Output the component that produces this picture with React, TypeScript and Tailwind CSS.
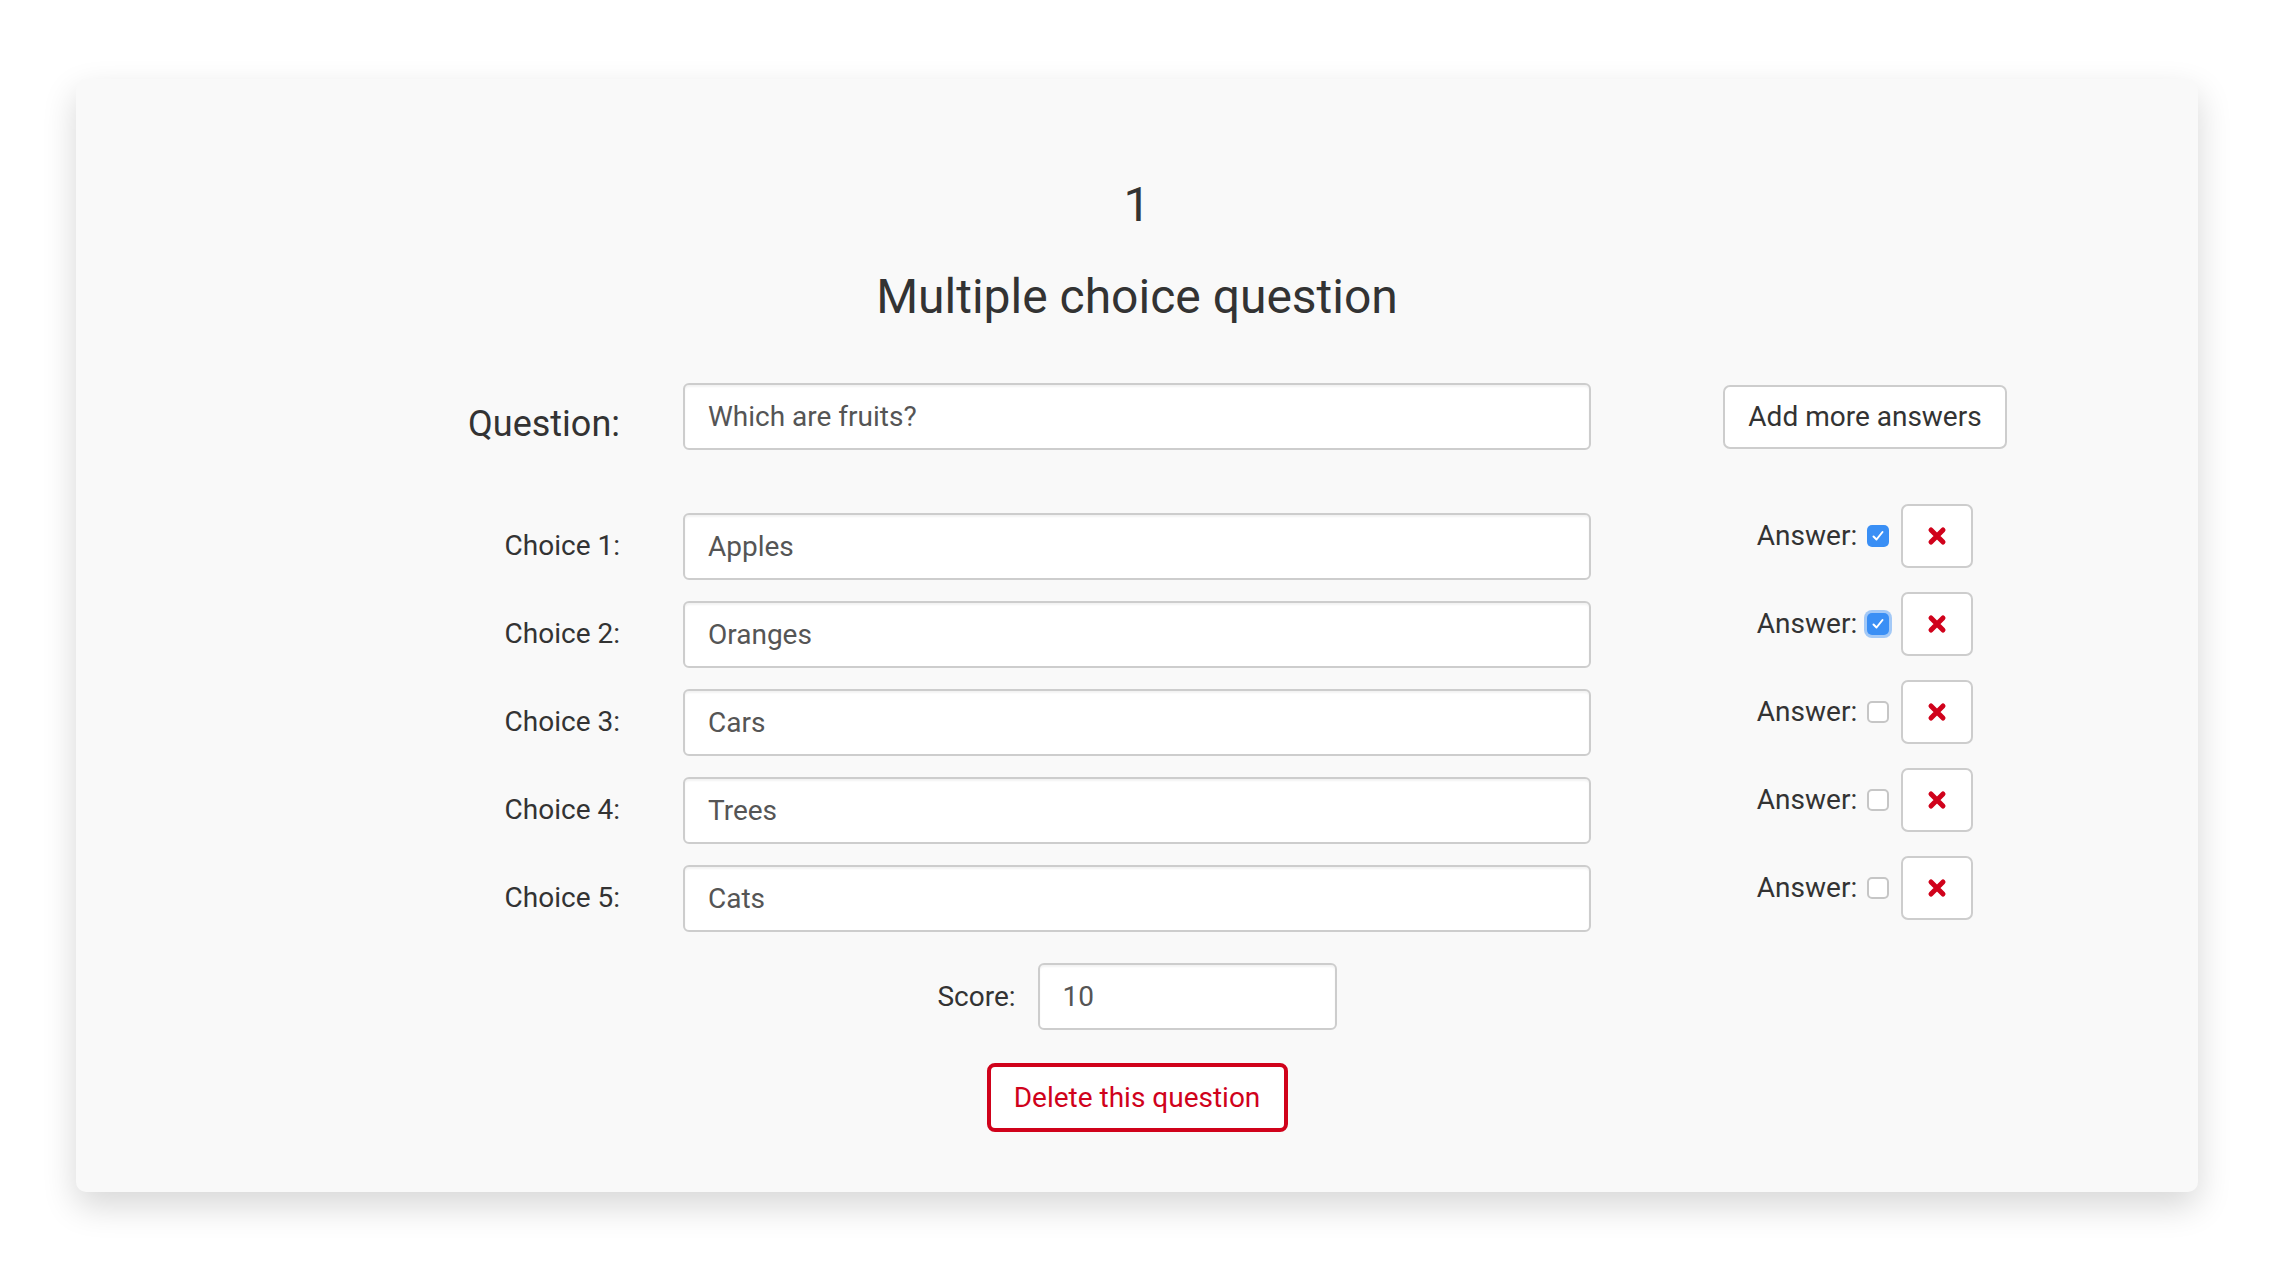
import { useState } from "react";

type Choice = {
  id: number;
  text: string;
  correct: boolean;
  focused?: boolean;
};

const initialChoices: Choice[] = [
  { id: 1, text: "Apples", correct: true },
  { id: 2, text: "Oranges", correct: true, focused: true },
  { id: 3, text: "Cars", correct: false },
  { id: 4, text: "Trees", correct: false },
  { id: 5, text: "Cats", correct: false },
];

function RemoveIcon() {
  return (
    <svg width="20" height="20" viewBox="0 0 20 20" aria-hidden>
      <path
        d="M4 4 L16 16 M16 4 L4 16"
        stroke="#d0021b"
        strokeWidth="5"
        strokeLinecap="round"
        fill="none"
      />
    </svg>
  );
}

function AnswerCheckbox({ checked, focused, onToggle }: { checked: boolean; focused?: boolean; onToggle: () => void }) {
  return (
    <button
      type="button"
      onClick={onToggle}
      className={`flex h-[22px] w-[22px] items-center justify-center rounded-[5px] ${
        checked ? "bg-[#3a8ff5]" : "border-2 border-[#c6c6c6] bg-white"
      } ${focused ? "shadow-[0_0_0_3px_rgba(58,143,245,0.45)]" : ""}`}
      aria-pressed={checked}
    >
      {checked && (
        <svg width="16" height="16" viewBox="0 0 16 16" aria-hidden>
          <path d="M3.5 8.5 L6.5 11.5 L12.5 4" stroke="#fff" strokeWidth="2" fill="none" strokeLinecap="round" strokeLinejoin="round" />
        </svg>
      )}
    </button>
  );
}

const inputBase =
  "h-[67px] rounded-[6px] border-2 border-[#cdcdcd] bg-white pl-[23px] text-[28px] text-[#555] shadow-[inset_0_2px_2px_rgba(0,0,0,0.05)] outline-none";

export default function App() {
  const [question, setQuestion] = useState("Which are fruits?");
  const [choices, setChoices] = useState(initialChoices);
  const [score, setScore] = useState("10");

  const toggle = (id: number) =>
    setChoices((prev) => prev.map((c) => (c.id === id ? { ...c, correct: !c.correct } : c)));

  return (
    <div className="bg-white pb-[82px] pt-[79px] font-[Roboto,sans-serif] text-[#333]">
      <div className="ml-[76px] w-[2122px] rounded-[10px] bg-[#f9f9f9] pb-[60px] pt-[98px] shadow-[0_14px_34px_rgba(0,0,0,0.16)]">
        <h1 className="text-center text-[48px] font-normal leading-[56px]">1</h1>
        <h2 className="mt-[36px] text-center text-[48px] font-normal leading-[56px]">Multiple choice question</h2>

        <div className="mt-[58px] grid grid-cols-[1fr_908px_1fr]">
          <label className="self-start justify-self-end pr-[63px] pt-[21px] text-[36px] leading-[40px]">Question:</label>
          <input className={`${inputBase} w-full`} value={question} onChange={(e) => setQuestion(e.target.value)} />
          <div className="self-center pl-[132px]">
            <button
              type="button"
              className="h-[64px] w-[284px] rounded-[7px] border-2 border-[#cdcdcd] bg-white text-[28px] text-[#333]"
            >
              Add more answers
            </button>
          </div>
        </div>

        <div className="mt-[63px] flex flex-col gap-[21px]">
          {choices.map((c, i) => (
            <div key={c.id} className="grid grid-cols-[1fr_908px_1fr]">
              <label className="self-start justify-self-end pr-[63px] pt-[17px] text-[28px] leading-8">
                Choice {i + 1}:
              </label>
              <input
                className={`${inputBase} w-full`}
                value={c.text}
                onChange={(e) =>
                  setChoices((prev) => prev.map((p) => (p.id === c.id ? { ...p, text: e.target.value } : p)))
                }
              />
              <div className="-mt-[9px] self-start pl-[132px]">
                <div className="flex w-[284px] items-center justify-center">
                  <span className="text-[28px] leading-8">Answer:</span>
                  <span className="ml-[10px]">
                    <AnswerCheckbox checked={c.correct} focused={c.focused} onToggle={() => toggle(c.id)} />
                  </span>
                  <button
                    type="button"
                    className="ml-[12px] flex h-[64px] w-[72px] items-center justify-center rounded-[7px] border-2 border-[#cdcdcd] bg-white"
                    onClick={() => setChoices((prev) => prev.filter((p) => p.id !== c.id))}
                  >
                    <RemoveIcon />
                  </button>
                </div>
              </div>
            </div>
          ))}
        </div>

        <div className="mt-[31px] flex items-center justify-center gap-[22px]">
          <label className="text-[28px] leading-8">Score:</label>
          <input className={`${inputBase} w-[299px]`} value={score} onChange={(e) => setScore(e.target.value)} />
        </div>

        <div className="mt-[33px] flex justify-center">
          <button
            type="button"
            className="h-[69px] w-[301px] rounded-[8px] border-4 border-[#d0021b] bg-white text-[28px] text-[#d0021b]"
          >
            Delete this question
          </button>
        </div>
      </div>
    </div>
  );
}
